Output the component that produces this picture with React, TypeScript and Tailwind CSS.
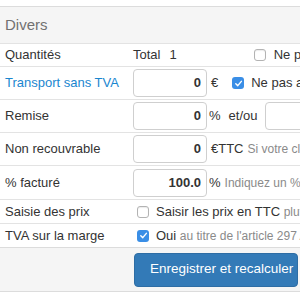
import React from "react";

const font = { fontFamily: '"Liberation Sans", Arial, sans-serif' };

function Check({ on }: { on?: boolean }) {
  if (on) {
    return (
      <span className="inline-flex h-[12px] w-[12px] shrink-0 items-center justify-center rounded-[3px] bg-[#3a8ee6]">
        <svg width="9" height="9" viewBox="0 0 10 10" fill="none">
          <path d="M2 5.2 4.2 7.4 8.2 2.6" stroke="white" strokeWidth="1.6" strokeLinecap="round" strokeLinejoin="round" />
        </svg>
      </span>
    );
  }
  return <span className="inline-block h-[12px] w-[12px] shrink-0 rounded-[3px] border border-[#b3b3b3] bg-white shadow-[inset_0_1px_1px_rgba(0,0,0,0.08)]" />;
}

function NumBox({ value, w = "w-[74px]" }: { value?: string; w?: string }) {
  return (
    <div className={`flex h-[28px] ${w} shrink-0 items-center justify-end rounded-[4px] border border-[#cfcfcf] bg-white pr-[5px] text-[13px] font-bold text-[#333]`}>
      {value}
    </div>
  );
}

function Row({ label, h, children, link }: { label: string; h: string; children: React.ReactNode; link?: boolean }) {
  return (
    <div className={`grid grid-cols-[128px_1fr] border-t border-[#e3e3e3] ${h}`}>
      <div className={`flex items-center pl-[5px] text-[13px] ${link ? "text-[#1a86cf]" : "text-[#333]"}`}>{label}</div>
      <div className="flex items-center whitespace-nowrap pl-[5px] text-[13px] text-[#333]">{children}</div>
    </div>
  );
}

export default function App() {
  return (
    <div className="h-[300px] w-[300px] overflow-hidden bg-white" style={font}>
      <div className="mt-[6px] w-[440px] border-t border-[#dcdcdc]">
        {/* heading */}
        <div className="flex h-[36px] items-center bg-[#f5f5f5] pl-[5px] text-[15px] text-[#717171]">Divers</div>

        <Row label="Quantités" h="h-[23px]">
          <span>Total</span>
          <span className="ml-[9px]">1</span>
          <span className="ml-[77px] flex items-center gap-[8px]">
            <Check />
            <span>Ne pas afficher</span>
          </span>
        </Row>

        <Row label="Transport sans TVA" h="h-[33px]" link>
          <NumBox value="0" />
          <span className="ml-[4px]">€</span>
          <span className="ml-[14px] flex items-center gap-[7px]">
            <Check on />
            <span>Ne pas appliquer</span>
          </span>
        </Row>

        <Row label="Remise" h="h-[33px]">
          <NumBox value="0" />
          <span className="ml-[2px]">%</span>
          <span className="ml-[8px]">et/ou</span>
          <span className="ml-[8px]">
            <NumBox />
          </span>
        </Row>

        <Row label="Non recouvrable" h="h-[33px]">
          <NumBox value="0" />
          <span className="ml-[4px]">€TTC</span>
          <span className="ml-[4px] text-[12px] text-[#8a8a8a]">Si votre client ne paie pas</span>
        </Row>

        <Row label="% facturé" h="h-[34px]">
          <NumBox value="100.0" />
          <span className="ml-[2px]">%</span>
          <span className="ml-[4px] text-[12px] text-[#8a8a8a]">Indiquez un % si besoin</span>
        </Row>

        <Row label="Saisie des prix" h="h-[24px]">
          <span className="ml-[4px] flex items-center gap-[7px]">
            <Check />
            <span>
              Saisir les prix en TTC <span className="text-[12px] text-[#8a8a8a]">plutôt que HT</span>
            </span>
          </span>
        </Row>

        <Row label="TVA sur la marge" h="h-[24px]">
          <span className="ml-[4px] flex items-center gap-[7px]">
            <Check on />
            <span>
              Oui <span className="text-[12px] text-[#8a8a8a]">au titre de l'article 297 A du CGI</span>
            </span>
          </span>
        </Row>

        <div className="grid h-[45px] grid-cols-[128px_1fr] border-y border-[#dcdcdc] bg-[#f5f5f5]">
          <div />
          <div className="flex items-center pl-[6px]">
            <button className="h-[34px] w-[164px] whitespace-nowrap rounded-[4px] border border-[#2e6da4] bg-[#337ab7] pl-[15px] text-left text-[13.5px] text-white">
              Enregistrer et recalculer
            </button>
          </div>
        </div>
      </div>
    </div>
  );
}
